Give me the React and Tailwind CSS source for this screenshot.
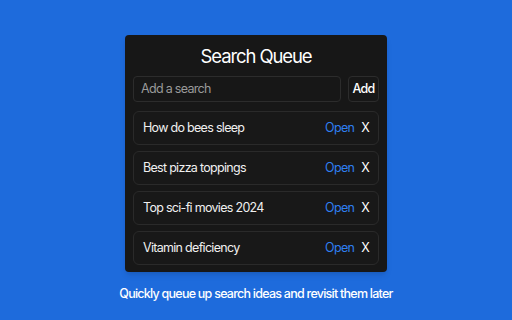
export default function App() {
  const items = ["How do bees sleep", "Best pizza toppings", "Top sci-fi movies 2024", "Vitamin deficiency"];
  return (
    <div className="w-[512px] h-[320px] bg-[#1e6bdc] flex flex-col items-center pt-[35px]" style={{ fontFamily: "Inter, 'Noto Sans', sans-serif" }}>
      <div className="w-[262px] bg-[#171717] rounded-[4px] px-[8px] pt-[9px] pb-[7px] flex flex-col shadow-md">
        <h1 className="text-[18.5px] leading-[24px] tracking-[-1.1px] text-white text-center">Search Queue</h1>
        <div className="flex gap-[7px] mt-[8px]">
          <div className="w-[208px] h-[26px] border border-[#2c2c2c] rounded-[4px] flex items-center px-[7px] text-[12.5px] tracking-[-0.7px] text-[#9a9a9a]">Add a search</div>
          <div className="w-[31px] h-[26px] border border-[#2c2c2c] rounded-[4px] flex items-center justify-center text-[12.5px] tracking-[-0.7px] font-medium text-white">Add</div>
        </div>
        <div className="flex flex-col gap-[6px] mt-[9px]">
          {items.map((t) => (
            <div key={t} className="h-[34px] border border-[#2a2a2a] rounded-[6px] bg-[#181818] flex items-center pl-[9px] pr-[9px] text-[12.5px] tracking-[-0.7px]">
              <span className="text-[#f0f0f0] flex-1">{t}</span>
              <span className="text-[#2f7ff0]">Open</span>
              <span className="text-white ml-[7px]">X</span>
            </div>
          ))}
        </div>
      </div>
      <p className="mt-[13px] text-[12.5px] tracking-[-0.75px] font-medium text-white">Quickly queue up search ideas and revisit them later</p>
    </div>
  );
}
